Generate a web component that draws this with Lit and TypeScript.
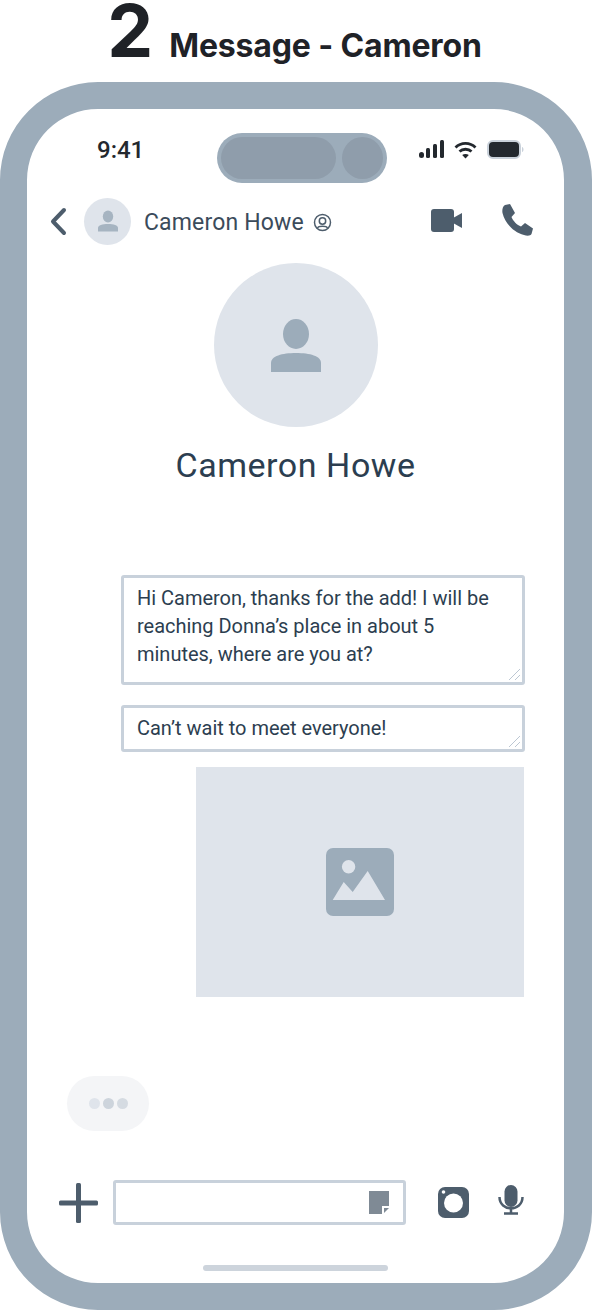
import { LitElement, html, css, svg } from "lit";
import { customElement } from "lit/decorators.js";

const person = svg`<ellipse cx="25" cy="15" rx="13" ry="15" /><path d="M0 53V44C0 37 11 34 25 34S50 37 50 44V53Z" />`;

@customElement("app-root")
export class AppRoot extends LitElement {
  static styles = css`
    :host { display: block; width: 592px; height: 1310px; background: #fff; overflow: hidden; font-family: "Roboto", "Noto Sans", sans-serif; color: #2c3e50; }
    .title { height: 82px; display: flex; justify-content: center; align-items: baseline; gap: 16px; font-family: "Inter", sans-serif; font-weight: 700; color: #1f2227; padding-right: 3px; box-sizing: border-box; }
    .num { font-size: 73px; line-height: 61px; }
    .sub { font-size: 32px; letter-spacing: -0.15px; line-height: 61px; }
    .phone { height: 1228px; box-sizing: border-box; border: 27px solid #9cacba; border-right-width: 28px; border-radius: 98px; background: #fff; display: flex; flex-direction: column; position: relative; }
    .status { display: flex; align-items: center; height: 49px; margin-top: 24px; padding: 0 37px 0 70px; position: relative; }
    .time { font-size: 24px; color: #23282e; width: 120px; height: 32px; line-height: 32px; margin-top: -16px; font-weight: 500; flex: none; }
    .island { width: 170px; height: 50px; box-sizing: border-box; background: #9cacba; border-radius: 25px; padding: 4px; display: flex; gap: 6px; flex: none; }
    .pill { width: 116px; border-radius: 21px; background: #8f9dab; }
    .dot { width: 41px; border-radius: 50%; background: #8f9dab; }
    .sicons { display: flex; align-items: center; gap: 9px; margin-left: 32px; margin-top: -16px; }
    .batt { margin-left: 1px; flex: none; }
    .nav { display: flex; align-items: center; height: 48px; margin-top: 15px; padding-left: 23px; }
    .back { width: 17px; height: 29px; margin-right: 17px; flex: none; }
    .avatar-sm { width: 47px; height: 47px; border-radius: 50%; background: #dfe4eb; display: flex; align-items: center; justify-content: center; flex: none; margin-right: 13px; }
    .nav-name { font-size: 23px; color: #3b4b5b; white-space: nowrap; letter-spacing: 0.15px; margin-top: 2px; }
    .at { margin-left: 9px; width: 19px; height: 19px; margin-top: 3px; flex: none; }
    .nav-right { margin-left: auto; display: flex; align-items: center; gap: 40px; padding-right: 31px; margin-top: -2px; }
    .hero { display: flex; flex-direction: column; align-items: center; margin-top: 18px; }
    .avatar-lg { width: 164px; height: 164px; border-radius: 50%; background: #dfe4eb; display: flex; align-items: center; justify-content: center; }
    .hero-name { margin-top: 17px; font-size: 34px; line-height: 42px; letter-spacing: 0.55px; font-weight: 440; color: #2c3e50; }
    .msgs { margin-top: 89px; padding: 0 39px 0 94px; display: flex; flex-direction: column; align-items: stretch; }
    .bubble { position: relative; box-sizing: border-box; border: 3px solid #c8d1db; border-radius: 3px; padding: 6px 13px; font-size: 20px; line-height: 28px; letter-spacing: -0.02px; font-weight: 440; color: #2c3e50; background: #fff; white-space: nowrap; }
    .bubble.one { height: 110px; }
    .bubble.two { height: 47px; margin-top: 20px; }
    .grip { position: absolute; right: 1px; bottom: 1px; width: 13px; height: 13px; }
    .image { margin-top: 15px; margin-left: 75px; margin-right: 1px; height: 230px; background: #dfe4eb; display: flex; align-items: center; justify-content: center; }
    .typing { margin: 79px 0 0 40px; width: 82px; height: 55px; border-radius: 28px; background: #f4f5f7; display: flex; align-items: center; justify-content: center; gap: 3px; }
    .typing i { width: 11px; height: 11px; border-radius: 50%; background: #dfe4eb; }
    .typing i:nth-child(2) { background: #cdd4dc; }
    .typing i:nth-child(3) { background: #d5dbe2; }
    .input-row { display: flex; align-items: center; margin-top: 49px; padding-left: 32px; height: 45px; }
    .plus { width: 39px; height: 40px; margin-right: 15px; flex: none; }
    .input { width: 293px; height: 45px; box-sizing: border-box; border: 3px solid #c8d1db; border-radius: 3px; display: flex; align-items: center; justify-content: flex-end; padding-right: 14px; flex: none; }
    .cam { margin-left: 32px; flex: none; }
    .mic { margin-left: 29px; margin-bottom: 5px; flex: none; }
    .home { width: 185px; height: 6px; border-radius: 3px; background: #cdd4dc; margin: 40px auto 0; }
  `;

  render() {
    return html`
      <div class="title"><span class="num">2</span><span class="sub">Message - Cameron</span></div>
      <div class="phone">
        <div class="status">
          <div class="time">9:41</div>
          <div class="island"><div class="pill"></div><div class="dot"></div></div>
          <div class="sicons">
            <svg width="26" height="19" viewBox="0 0 26 19" fill="#23282e">
              <rect x="0" y="12" width="5" height="6" rx="2.5" /><rect x="7" y="8" width="4" height="10" rx="1.5" /><rect x="14" y="4" width="4" height="14" rx="1.5" /><rect x="21" y="0" width="4" height="18" rx="1.5" />
            </svg>
            <svg width="23" height="18" viewBox="0 0 23 18" fill="none" stroke="#23282e" stroke-width="2.8">
              <path d="M1.5 6.5C7 1 16 1 21.5 6.5" /><path d="M5.5 10.5C8.7 7.5 14.3 7.5 17.5 10.5" /><path d="M8.2 14L11.5 17.5L14.8 14C13 12.5 10 12.5 8.2 14Z" fill="#23282e" stroke="none" />
            </svg>
            <svg class="batt" width="38" height="19" viewBox="0 0 38 19">
              <rect x="1" y="1" width="32" height="17" rx="5" fill="#23282e" stroke="#c9d1da" stroke-width="2" />
              <path d="M35 7c2 .5 2 4.500 0 5Z" fill="#c9d1da" />
            </svg>
          </div>
        </div>
        <div class="nav">
          <svg class="back" viewBox="0 0 17 29" fill="none" stroke="#4d5d6c" stroke-width="4" stroke-linecap="round" stroke-linejoin="round"><path d="M14 3L3 14.500L14 26" /></svg>
          <div class="avatar-sm"><svg width="20" height="22" viewBox="0 0 50 53" fill="#a6b4c1">${person}</svg></div>
          <div class="nav-name">Cameron Howe</div>
          <svg class="at" viewBox="0 0 19 19" fill="none" stroke="#4d5d6c" stroke-width="1.500"><circle cx="9.500" cy="9.500" r="8" /><circle cx="9.500" cy="8" r="3.200" /><path d="M4.500 15c1-2.500 9-2.500 10 0" /></svg>
          <div class="nav-right">
            <svg width="31" height="23" viewBox="0 0 31 23" fill="#4d5d6c"><rect x="0" y="0" width="23" height="23" rx="3" /><path d="M22 9L31 4V19L22 14Z" /></svg>
            <svg width="31" height="32" viewBox="0 0 31 32" fill="#4d5d6c"><path d="M3 1L8 0L13 9L9.500 13C11 17 15 21 19 22.500L23 19L31 24.500L29.500 30C28.500 32 25 32 22 31C11 28 3 19 .5 9C0 6 .5 2.500 3 1Z" /></svg>
          </div>
        </div>
        <div class="hero">
          <div class="avatar-lg"><svg width="50" height="53" viewBox="0 0 50 53" fill="#9cacba">${person}</svg></div>
          <div class="hero-name">Cameron Howe</div>
        </div>
        <div class="msgs">
          <div class="bubble one">Hi Cameron, thanks for the add! I will be<br />reaching Donna’s place in about 5<br />minutes, where are you at?${this.grip()}</div>
          <div class="bubble two">Can’t wait to meet everyone!${this.grip()}</div>
          <div class="image">
            <svg width="68" height="68" viewBox="0 0 68 68">
              <rect width="68" height="68" rx="7" fill="#9cacba" />
              <circle cx="22.600" cy="18.700" r="6.700" fill="#dfe4eb" />
              <path d="M6.700 52L17.700 34L26.700 44L41.700 23L59 52Z" fill="#dfe4eb" />
            </svg>
          </div>
        </div>
        <div class="typing"><i></i><i></i><i></i></div>
        <div class="input-row">
          <svg class="plus" viewBox="0 0 39 40" fill="#4d5d6c"><rect x="0" y="17.500" width="39" height="5" rx="1.500" /><rect x="17" y="0" width="5" height="40" rx="1.500" /></svg>
          <div class="input">
            <svg width="20" height="23" viewBox="0 0 20 23"><path d="M0 0H20V15H13V23H0Z" fill="#7f8a95" /><path d="M15 17H20L15 22Z" fill="#7f8a95" /></svg>
          </div>
          <svg class="cam" width="31" height="31" viewBox="0 0 31 31"><rect width="31" height="31" rx="7" fill="#4d5d6c" /><circle cx="15.500" cy="16" r="9.500" fill="#fff" /><circle cx="5.500" cy="5" r="1.800" fill="#fff" /></svg>
          <svg class="mic" width="26" height="30" viewBox="0 0 26 30" fill="none" stroke="#4d5d6c" stroke-width="2.500"><rect x="6.500" y="0" width="13" height="22" rx="6.500" fill="#4d5d6c" stroke="none" /><path d="M1.500 12C1.500 27 24.500 27 24.500 12" /><path d="M13 24V28.500M6 28.500H20" /></svg>
        </div>
        <div class="home"></div>
      </div>
    `;
  }

  grip() {
    return html`<svg class="grip" viewBox="0 0 13 13" stroke="#bcc7d3" stroke-width="1" fill="none"><path d="M1 12L12 1M7 12L12 7" /></svg>`;
  }
}
